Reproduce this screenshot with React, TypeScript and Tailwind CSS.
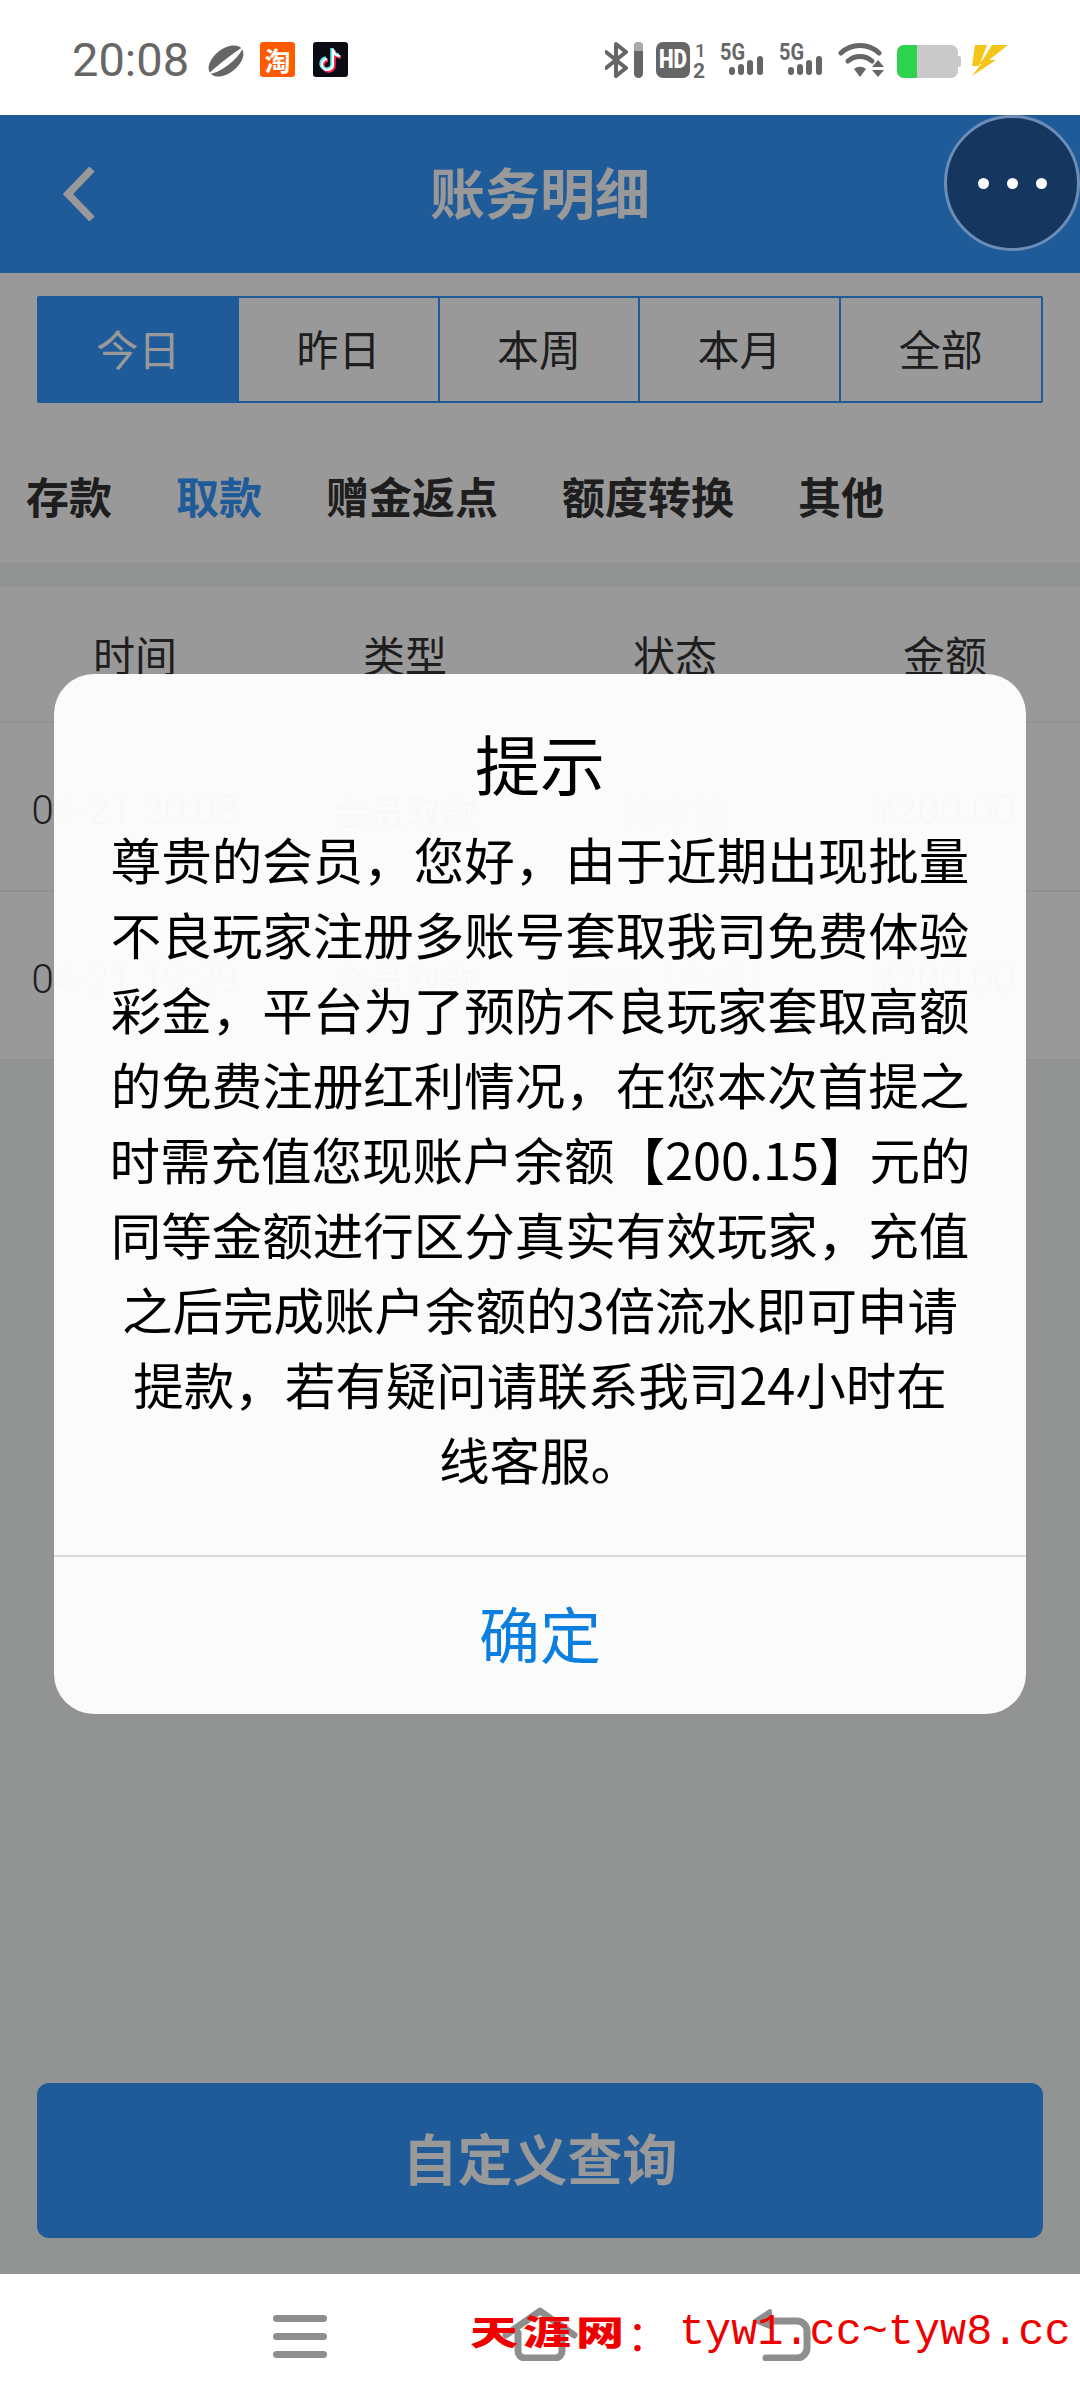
const cjk = "font-['Noto_Sans_CJK_SC','Noto_Sans',sans-serif]";

const periods = ['今日', '昨日', '本周', '本月', '全部'];
const categories = ['存款', '取款', '赠金返点', '额度转换', '其他'];
const columns = ['时间', '类型', '状态', '金额'];

const notice = [
  '尊贵的会员，您好，由于近期出现批量',
  '不良玩家注册多账号套取我司免费体验',
  '彩金，平台为了预防不良玩家套取高额',
  '的免费注册红利情况，在您本次首提之',
  '时需充值您现账户余额【200.15】元的',
  '同等金额进行区分真实有效玩家，充值',
  '之后完成账户余额的3倍流水即可申请',
  '提款，若有疑问请联系我司24小时在',
  '线客服。',
];

function Signal() {
  return (
    <svg width="44" height="32" viewBox="0 0 44 32" className="overflow-visible">
      <text x="0" y="17" fontSize="23" fontWeight="700" fill="#666" fontFamily="Roboto, sans-serif" textLength="25" lengthAdjust="spacingAndGlyphs">5G</text>
      <rect x="9" y="24" width="6" height="8" rx="3" fill="#666" />
      <rect x="18" y="21" width="6" height="11" rx="3" fill="#666" />
      <rect x="27" y="17" width="6" height="15" rx="3" fill="#666" />
      <rect x="37" y="13" width="6" height="19" rx="3" fill="#666" />
    </svg>
  );
}

function StatusBar() {
  return (
    <div className="h-[115px] bg-white flex items-start pt-[42px] pl-[72px]">
      <span className="font-['Roboto',sans-serif] text-[47px] leading-[36px] text-[#666] w-[136px]">20:08</span>
      <svg width="36" height="32" viewBox="0 0 36 32" className="mt-[3px]">
        <g transform="rotate(-38 18 16)">
          <ellipse cx="18" cy="16" rx="20" ry="12" fill="#666" />
          <path d="M-2 16 C8 21 28 21 38 16 C28 15 8 15 -2 16 Z" fill="#fff" stroke="#fff" strokeWidth="1.5" />
        </g>
      </svg>
      <div className={`ml-[16px] w-[35px] h-[35px] rounded-[3px] bg-[#ff5a00] text-white text-[26px] leading-[35px] font-bold text-center ${cjk}`}>淘</div>
      <svg width="35" height="35" viewBox="0 0 35 35" className="ml-[18px]">
        <rect width="35" height="35" rx="3" fill="#0b0b14" />
        <path d="M20 7 V22 A5.5 5.5 0 1 1 14 17 M20 8 C21 12 24 14 27 14" fill="none" stroke="#ff2d55" strokeWidth="3.5" transform="translate(1 1)" />
        <path d="M20 7 V22 A5.5 5.5 0 1 1 14 17 M20 8 C21 12 24 14 27 14" fill="none" stroke="#5fe8ee" strokeWidth="3.5" transform="translate(-1 -1)" />
        <path d="M20 7 V22 A5.5 5.5 0 1 1 14 17 M20 8 C21 12 24 14 27 14" fill="none" stroke="#fff" strokeWidth="2" />
      </svg>

      <svg width="38" height="36" viewBox="0 0 38 36" className="ml-[257px]">
        <path d="M1 10 L21 26 L11 34 V2 L21 10 L1 26" fill="none" stroke="#666" strokeWidth="4" strokeLinejoin="round" strokeLinecap="round" />
        <rect x="29" y="0" width="9" height="36" rx="4.5" fill="#666" />
        <path d="M29 9 V4.5 A4.5 4.5 0 0 1 38 4.5 V9 Z" fill="#aaa" />
      </svg>
      <svg width="50" height="36" viewBox="0 0 50 36" className="ml-[13px] overflow-visible">
        <rect width="34" height="36" rx="7" fill="#666" />
        <text x="17" y="26" textAnchor="middle" fontSize="25" fontWeight="900" fill="#fff" fontFamily="Roboto, sans-serif" textLength="28" lengthAdjust="spacingAndGlyphs">HD</text>
        <text x="39" y="15" fontSize="19" fontWeight="500" fill="#666" fontFamily="Roboto, sans-serif">1</text>
        <text x="37" y="36" fontSize="21" fontWeight="700" fill="#666" fontFamily="Roboto, sans-serif">2</text>
      </svg>
      <div className="ml-[14px] mt-[1px]"><Signal /></div>
      <div className="ml-[15px] mt-[1px]"><Signal /></div>
      <svg width="47" height="36" viewBox="0 0 47 36" className="ml-[15px]">
        <path d="M3 11 A28 28 0 0 1 41 11" fill="none" stroke="#666" strokeWidth="5" strokeLinecap="round" />
        <path d="M10 19 A18 18 0 0 1 34 19" fill="none" stroke="#666" strokeWidth="5" strokeLinecap="round" />
        <path d="M16 27 A9 9 0 0 1 28 27 L22 35 Z" fill="#666" />
        <path d="M40 18 L46 25 H34 Z M34 28 H46 L40 35 Z" fill="#666" />
      </svg>
      <svg width="64" height="34" viewBox="0 0 64 34" className="ml-[12px] mt-[3px]">
        <rect x="0" y="0" width="61" height="33" rx="7" fill="#c9c9c9" />
        <path d="M7 0 H20 V33 H7 A7 7 0 0 1 0 26 V7 A7 7 0 0 1 7 0 Z" fill="#2dd24f" />
        <rect x="60" y="11" width="4" height="11" rx="2" fill="#c9c9c9" />
      </svg>
      <svg width="36" height="32" viewBox="0 0 36 32" className="ml-[11px] mt-[3px]">
        <path d="M3 0 H15 L7 21 H0 Z" fill="#f5c518" />
        <path d="M20 0 H36 L17 15 H24 L0 31 L9 19 H7 L12 13 Z" fill="#f5c518" />
      </svg>
    </div>
  );
}

function RecordRow({ time, status }: { time: string; status: React.ReactNode }) {
  return (
    <div className="grid grid-cols-4 h-[169px] pt-[8px] items-center text-center text-[36px] text-[#333] whitespace-nowrap border-b-2 border-[#f0f0f0]">
      <div className="font-['Roboto',sans-serif] text-[40px] font-light">{time}</div>
      <div>会员取款</div>
      <div>{status}</div>
      <div className="font-['Roboto',sans-serif] text-[40px] font-light">¥200.00</div>
    </div>
  );
}

function NavBar() {
  return (
    <div className="relative h-[126px] bg-white flex items-start pt-[41px] pl-[273px]">
      <div className="flex flex-col gap-[11px] w-[54px]">
        <div className="h-[7px] rounded-full bg-[#8e8e8e]" />
        <div className="h-[7px] rounded-full bg-[#8e8e8e]" />
        <div className="h-[7px] rounded-full bg-[#8e8e8e]" />
      </div>
      <svg width="76" height="54" viewBox="0 0 76 54" className="ml-[175px] -mt-[8px]">
        <path d="M4 28 L38 4 L72 28 M16 26 V44 A7 7 0 0 0 23 51 H53 A7 7 0 0 0 60 44 V26" fill="none" stroke="#8e8e8e" strokeWidth="7" strokeLinecap="round" strokeLinejoin="round" />
      </svg>
      <svg width="60" height="54" viewBox="0 0 60 54" className="ml-[174px] -mt-[8px]">
        <path d="M16 14 H45 A10 10 0 0 1 55 24 V41 A10 10 0 0 1 45 51 H14" fill="none" stroke="#8e8e8e" strokeWidth="7" strokeLinecap="round" />
        <path d="M18 4 L3 14 L18 20 Z" fill="#8e8e8e" stroke="#8e8e8e" strokeWidth="4" strokeLinejoin="round" />
      </svg>

      {/* site watermark sits over the nav icons */}
      <div className="absolute left-[470px] top-[31px] flex items-center text-[#ee0000] whitespace-nowrap h-[50px]">
        <span className={`inline-block scale-y-[.7] text-[48px] font-black leading-none w-[157px] tracking-[5px] ${cjk}`}>天涯网</span>
        <span className={`text-[42px] leading-none w-[52px] mt-[6px] ${cjk}`}>：</span>
        <span className="font-['Liberation_Mono',monospace] text-[43.5px] leading-none mt-[6px]">tyw1.cc~tyw8.cc</span>
      </div>
    </div>
  );
}

export default function App() {
  return (
    <div className={`w-[1080px] h-[2400px] flex flex-col bg-white overflow-hidden ${cjk}`}>
      <StatusBar />

      <div className="relative flex-1 flex flex-col bg-[#f4f5f5]">
        {/* Header */}
        <div className="h-[158px] bg-[#3496ff] flex items-center">
          <div className="w-[136px] pl-[60px]">
            <svg width="40" height="58" viewBox="0 0 40 58">
              <path d="M32 4 L8 29 L32 54" fill="none" stroke="#fff" strokeWidth="7.5" />
            </svg>
          </div>
          <div className="flex-1 text-center text-white text-[55px] leading-none font-bold -mt-[8px]">账务明细</div>
          <div className="w-[136px]" />
        </div>

        <div className="bg-white">
          {/* Period tabs */}
          <div className="pt-[23px] px-[37px]">
            <div className="grid grid-cols-5 h-[107px] border-2 border-[#3496ff] rounded-[2px]">
              {periods.map((p, i) => (
                <div
                  key={p}
                  className={`flex items-center justify-center text-[42px] pb-[5px] ${
                    i === 0 ? 'bg-[#3496ff] text-white' : 'text-[#333]'
                  } ${i < 4 ? 'border-r-2 border-[#3496ff]' : ''}`}
                >
                  {p}
                </div>
              ))}
            </div>
          </div>

          {/* Categories */}
          <div className="h-[160px] pl-[26px] pt-[24px] flex items-center gap-[64px] text-[43px] font-bold text-[#333]">
            {categories.map((c) => (
              <span key={c} className={c === '取款' ? 'text-[#3496ff]' : ''}>{c}</span>
            ))}
          </div>
        </div>

        <div className="h-[24px]" />

        {/* Records */}
        <div className="bg-white">
          <div className="grid grid-cols-4 h-[136px] pb-[2px] items-center text-center text-[42px] text-[#333] border-b-2 border-[#f0f0f0]">
            {columns.map((c) => (
              <div key={c}>{c}</div>
            ))}
          </div>
          <RecordRow time="04-21 20:08" status={<span className="text-[#e8574a]">待审核</span>} />
          <RecordRow
            time="04-21 19:29"
            status={
              <span>
                <span className="text-[#e8574a]">失败</span>
                <span className="text-[#3496ff]">【查看】</span>
              </span>
            }
          />
        </div>

        <div className="flex-1" />

        <div className="px-[37px] pb-[36px]">
          <div className="h-[155px] rounded-[12px] bg-[#3496ff] flex items-center justify-center text-white text-[55px] font-bold pb-[8px]">
            自定义查询
          </div>
        </div>

        {/* Dim layer */}
        <div className="absolute inset-0 bg-black/40" />

        {/* Floating menu */}
        <div className="absolute top-0 right-0 w-[136px] h-[136px] rounded-full bg-[#15365f] border-[3px] border-[#6b8db8] flex items-center justify-center gap-[18px]">
          <div className="w-[11px] h-[11px] rounded-full bg-white" />
          <div className="w-[11px] h-[11px] rounded-full bg-white" />
          <div className="w-[11px] h-[11px] rounded-full bg-white" />
        </div>

        {/* Dialog */}
        <div className="absolute left-[54px] top-[559px] w-[972px] h-[1040px] rounded-[40px] bg-[#fdfdfd]/[.98] flex flex-col text-black">
          <div className="pt-[46px] text-center text-[65px] leading-[84px]">提示</div>
          <div className="mt-[17px] text-center text-[50.5px] leading-[75px] whitespace-nowrap">
            {notice.map((line) => (
              <div key={line}>{line}</div>
            ))}
          </div>
          <div className="mt-auto h-[159px] border-t-2 border-[#d9d9d9] flex items-center justify-center text-[61px] text-[#0a7fe0] pb-[6px]">
            确定
          </div>
        </div>
      </div>

      <NavBar />
    </div>
  );
}
